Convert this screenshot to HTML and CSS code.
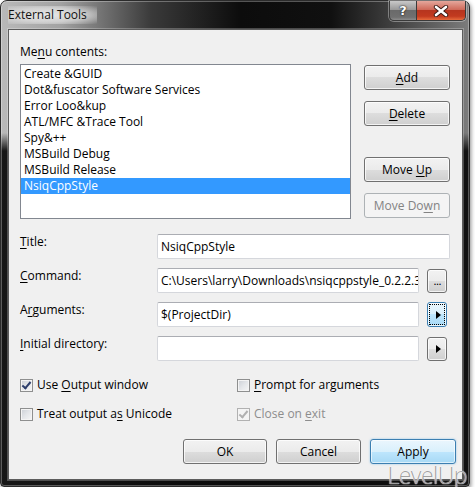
FILE: index.html
```html
<!DOCTYPE html>
<html lang="en">
<head>
    <meta charset="UTF-8">
    <title>External Tools</title>
    <link rel="stylesheet" href="styles.css">
</head>
<body>
    <div class="window">
        <div class="titlebar">
            <span class="title">External Tools</span>
            <div class="caption-buttons">
                <span class="cap help">?</span>
                <span class="cap close">
                    <svg width="16" height="12" viewBox="0 0 16 12">
                        <path d="M3 2 L13 10 M13 2 L3 10" stroke="#3a1a14" stroke-width="4.4" stroke-linecap="round"/>
                        <path d="M3 2 L13 10 M13 2 L3 10" stroke="#fff" stroke-width="2.6" stroke-linecap="round"/>
                    </svg>
                </span>
            </div>
        </div>

        <div class="client">
            <div class="menu-label">Me<u>n</u>u contents:</div>

            <div class="menu-row">
                <ul class="listbox">
                    <li>Create &amp;GUID</li>
                    <li>Dot&amp;fuscator Software Services</li>
                    <li>Error Loo&amp;kup</li>
                    <li>ATL/MFC &amp;Trace Tool</li>
                    <li>Spy&amp;++</li>
                    <li>MSBuild Debug</li>
                    <li>MSBuild Release</li>
                    <li class="selected">NsiqCppStyle</li>
                </ul>
                <div class="side-buttons">
                    <button class="btn"><u>A</u>dd</button>
                    <button class="btn"><u>D</u>elete</button>
                    <button class="btn move-up">Move <u>U</u>p</button>
                    <button class="btn" disabled>Move Do<u>w</u>n</button>
                </div>
            </div>

            <div class="fields">
                <div class="field-label"><u>T</u>itle:</div>
                <div class="textbox wide">NsiqCppStyle</div>

                <div class="field-label"><u>C</u>ommand:</div>
                <div class="textbox">C:\Users\larry\Downloads\nsiqcppstyle_0.2.2.3</div>
                <button class="mini dots">...</button>

                <div class="field-label">A<u>r</u>guments:</div>
                <div class="textbox">$(ProjectDir)</div>
                <button class="mini arrow focused"><span class="focus-rect"><span class="tri"></span></span></button>

                <div class="field-label"><u>I</u>nitial directory:</div>
                <div class="textbox"></div>
                <button class="mini arrow"><span class="tri"></span></button>
            </div>

            <div class="options">
                <label class="check"><span class="box checked"></span><span>Use <u>O</u>utput window</span></label>
                <label class="check"><span class="box"></span><span><u>P</u>rompt for arguments</span></label>
                <label class="check"><span class="box"></span><span>Treat output a<u>s</u> Unicode</span></label>
                <label class="check disabled"><span class="box checked"></span><span>Close on <u>e</u>xit</span></label>
            </div>

            <div class="actions">
                <button class="btn ok">OK</button>
                <button class="btn cancel">Cancel</button>
                <button class="btn default">Apply</button>
            </div>
        </div>

        <div class="watermark">LevelUp</div>
    </div>
</body>
</html>
```

FILE: styles.css
```css
body {
    margin: 0;
    background: #fff;
    font-family: "Segoe UI", "Open Sans", sans-serif;
    font-size: 12px;
    color: #000;
}
u {
    text-underline-offset: 2px;
}

/* window frame */
.window {
    position: relative;
    width: 468px;
    height: 485px;
    border: 1px solid #2b2b2b;
    border-radius: 7px 7px 4px 4px;
    background:
        linear-gradient(to bottom, rgba(0,0,0,0) 0, rgba(0,0,0,0) 132px, rgba(10,10,10,.93) 150px),
        linear-gradient(to right, #b9b9b9 0, #a2a2a2 60px, #3a3a3a 150px, #0c0c0c 240px, #101010 330px, #4e4e4e 410px, #7c7c7c 468px);
    box-shadow: inset 0 0 0 1px rgba(255,255,255,.3), 1px 2px 4px rgba(0,0,0,.45);
}
.titlebar {
    height: 28px;
    display: flex;
    align-items: flex-start;
}
.title {
    margin: 5px 0 0 7px;
    line-height: 18px;
    color: #111;
    padding: 0 10px 0 0;
    background: radial-gradient(ellipse at 45% 50%, rgba(235,235,235,.95) 0, rgba(225,225,225,.7) 55%, rgba(200,200,200,0) 100%);
}
.caption-buttons {
    margin-left: auto;
    margin-right: 3px;
    display: flex;
    border: 1px solid #3a3a3a;
    border-top: 0;
    border-radius: 0 0 5px 5px;
    overflow: hidden;
    box-shadow: 0 0 0 1px rgba(255,255,255,.35);
}
.cap {
    height: 19px;
    display: flex;
    align-items: center;
    justify-content: center;
}
.help {
    width: 26px;
    border-right: 1px solid #3a3a3a;
    background: linear-gradient(#c9c9c9 0, #9a9a9a 45%, #6a6a6a 50%, #707070 85%, #8c8c8c 100%);
    color: #fff;
    font-family: "DejaVu Sans", sans-serif;
    font-weight: bold;
    font-size: 13px;
    text-shadow: 0 0 2px #222, 0 0 1px #000;
}
.close {
    width: 48px;
    background: linear-gradient(#e4a79c 0, #cf6a5a 45%, #b6351f 50%, #c23a1f 80%, #e66a3c 100%);
}

/* client area */
.client {
    margin: 0 6px 0 7px;
    padding: 14px 12px 0 11px;
    box-sizing: border-box;
    height: 451px;
    background: #f0f0f0;
    border: 1px solid #5c5c5c;
    box-shadow: 0 0 0 1px rgba(255,255,255,.25);
}
.menu-label {
    line-height: 16px;
}
.menu-row {
    display: flex;
    gap: 13px;
    margin-top: 4px;
}
.listbox {
    list-style: none;
    margin: 0;
    padding: 1px 0 0;
    width: 331px;
    height: 155px;
    box-sizing: border-box;
    background: #fff;
    border: 1px solid #828790;
}
.listbox li {
    line-height: 16px;
    padding-left: 3px;
    white-space: nowrap;
}
.listbox li.selected {
    background: #3399ff;
    color: #fff;
}
.side-buttons {
    display: flex;
    flex-direction: column;
    gap: 11px;
    padding-top: 1px;
}
.side-buttons .move-up {
    margin-top: 20px;
}

/* buttons */
.btn {
    width: 86px;
    height: 25px;
    padding: 0;
    font: inherit;
    color: #000;
    border: 1px solid #707070;
    border-radius: 3px;
    background: linear-gradient(#f2f2f2 0, #ebebeb 50%, #dddddd 50%, #cfcfcf 100%);
    box-shadow: inset 0 0 0 1px rgba(255,255,255,.75);
}
.btn:disabled {
    color: #838383;
    border-color: #adb2b5;
    background: #f4f4f4;
    box-shadow: none;
}
.btn.default {
    border-color: #3c7fb1;
    background: linear-gradient(#eaf6fd 0, #d9f0fc 50%, #bee6fd 50%, #a7d9f5 100%);
    box-shadow: inset 0 0 0 1px rgba(255,255,255,.6), 0 0 2px rgba(60,160,230,.6);
}

/* fields */
.fields {
    display: grid;
    grid-template-columns: 137px 262px 31px;
    grid-auto-rows: 25px;
    row-gap: 9px;
    margin-top: 15px;
}
.field-label {
    grid-column: 1;
    line-height: 16px;
}
.textbox {
    grid-column: 2;
    height: 25px;
    box-sizing: border-box;
    padding: 0 0 0 3px;
    line-height: 23px;
    background: #fff;
    border: 1px solid #d5d7dc;
    border-top-color: #abadb3;
    border-radius: 2px;
    white-space: nowrap;
    overflow: hidden;
}
.textbox.wide {
    grid-column: 2 / 4;
}
.mini {
    grid-column: 3;
    width: 20px;
    height: 24px;
    margin: 1px 0 0 8px;
    padding: 0;
    border: 1px solid #707070;
    border-radius: 3px;
    background: linear-gradient(#f2f2f2 0, #ebebeb 50%, #dddddd 50%, #cfcfcf 100%);
    box-shadow: inset 0 0 0 1px rgba(255,255,255,.75);
    display: flex;
    align-items: center;
    justify-content: center;
}
.mini.dots {
    font: 11px "DejaVu Sans", sans-serif;
    letter-spacing: -1px;
    align-items: flex-end;
    padding-bottom: 4px;
    box-sizing: border-box;
}
.mini.focused {
    border-color: #3c7fb1;
    background: linear-gradient(#eaf6fd 0, #d9f0fc 50%, #bee6fd 50%, #a7d9f5 100%);
    margin-top: 0;
    height: 25px;
}
.focus-rect {
    width: 14px;
    height: 19px;
    border: 1px dotted #000;
    display: flex;
    align-items: center;
    justify-content: center;
}
.tri {
    width: 0;
    height: 0;
    border-top: 4px solid transparent;
    border-bottom: 4px solid transparent;
    border-left: 5px solid #000;
    margin-left: 2px;
}

/* checkboxes */
.options {
    display: grid;
    grid-template-columns: 217px 1fr;
    row-gap: 13px;
    margin-top: 16px;
}
.check {
    display: flex;
    align-items: center;
    gap: 4px;
    line-height: 16px;
}
.box {
    width: 13px;
    height: 13px;
    box-sizing: border-box;
    border: 1px solid #8e8f8f;
    background: linear-gradient(135deg, #cbcfd5 0, #e4e6e9 50%, #f6f6f6 100%);
    box-shadow: inset 0 0 0 1px #f4f4f4;
    position: relative;
}
.box.checked::after {
    content: "";
    position: absolute;
    left: 3px;
    top: 0px;
    width: 3px;
    height: 7px;
    border: solid #2c3d6b;
    border-width: 0 2px 2px 0;
    transform: rotate(40deg);
}
.check.disabled {
    color: #8d8d8d;
}
.check.disabled .box {
    border-color: #b1b1b1;
    background: #f4f4f4;
}
.check.disabled .box::after {
    border-color: #b0b0b0;
}

/* bottom buttons */
.actions {
    display: flex;
    justify-content: flex-end;
    gap: 9px;
    margin: 17px -6px 0 0;
}
.actions .ok {
    width: 84px;
}
.actions .cancel {
    width: 85px;
}

.watermark {
    position: absolute;
    right: 2px;
    bottom: -5px;
    font-family: "Open Sans", sans-serif;
    font-size: 23px;
    font-weight: 300;
    color: rgba(130,130,130,.75);
    letter-spacing: -0.5px;
    text-shadow: 0 0 1px #fff, 0 0 1px #fff;
}
```
